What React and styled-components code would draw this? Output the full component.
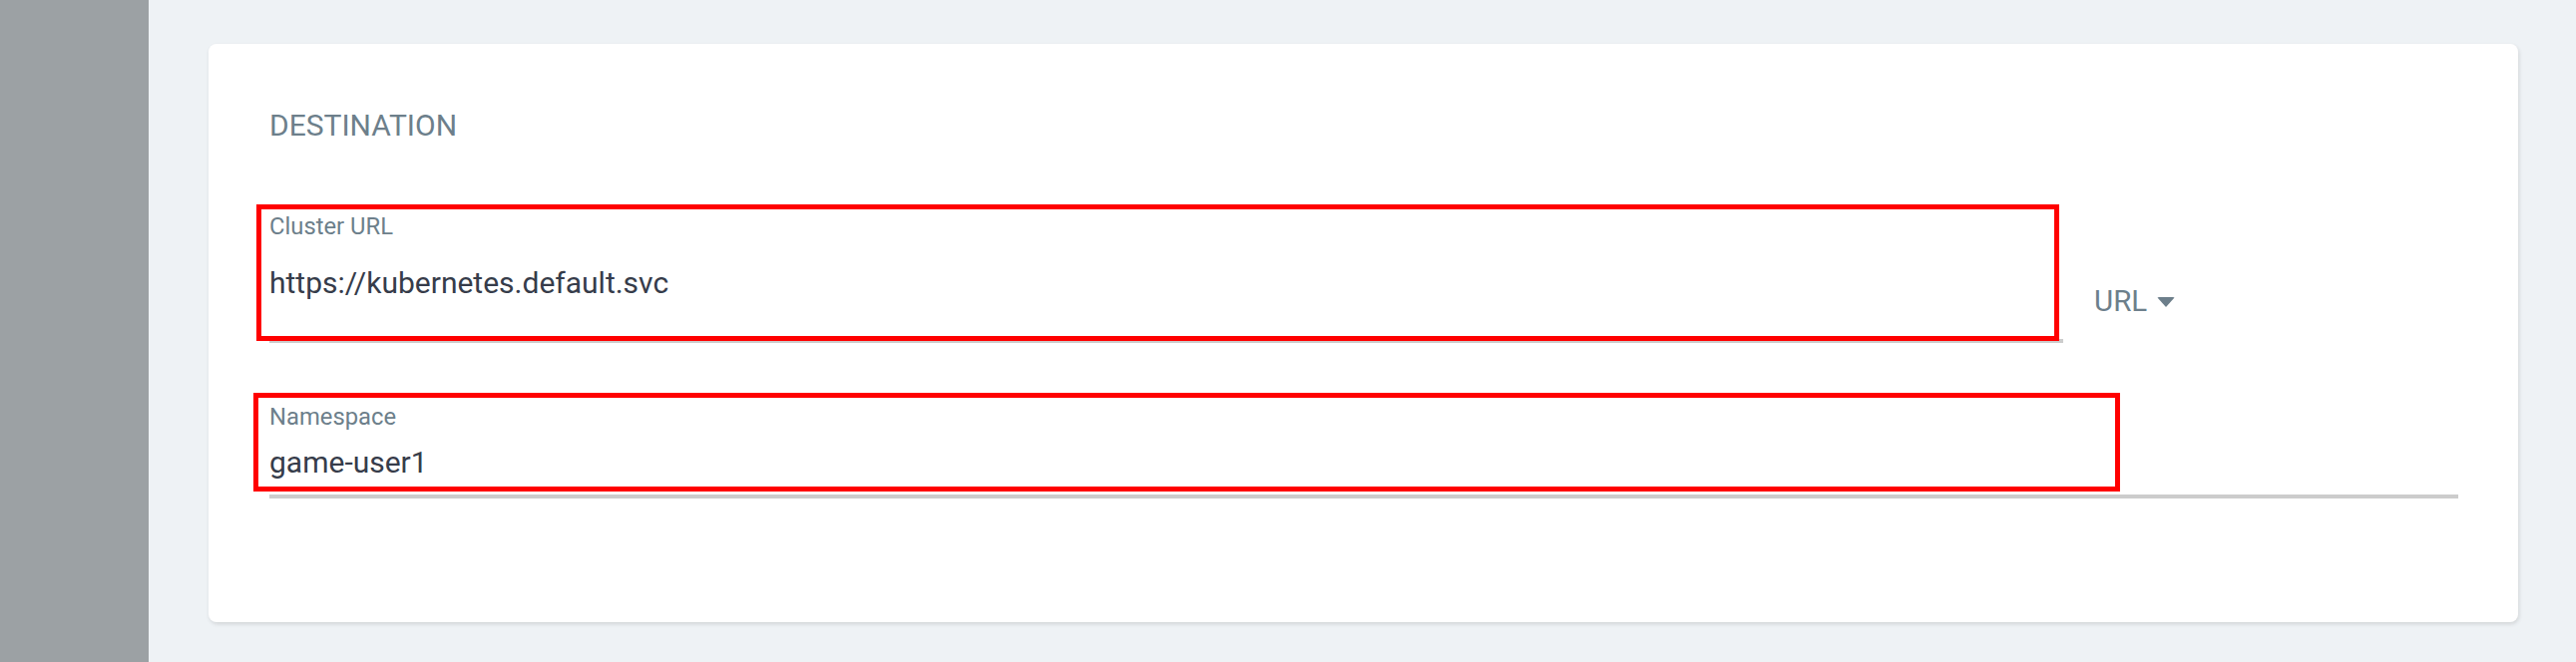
import React from 'react'
import styled, { createGlobalStyle } from 'styled-components'

const GlobalStyle = createGlobalStyle`
  html, body {
    margin: 0;
    padding: 0;
    background: #eef2f5;
  }
  body {
    font-family: Roboto, "Liberation Sans", sans-serif;
  }
`

const Page = styled.div`
  display: flex;
  width: 2582px;
  height: 664px;
  overflow: hidden;
  background: #eef2f5;
`

const Sidebar = styled.aside`
  width: 149px;
  flex-shrink: 0;
  background: #9ca1a4;
`

const Main = styled.main`
  flex: 1;
  padding: 44px 58px 0 60px;
`

const Card = styled.section`
  box-sizing: border-box;
  height: 580px;
  background: #fff;
  border-radius: 8px;
  box-shadow: 1px 2px 4px rgba(0, 0, 0, 0.12);
  padding: 64px 60px 0 61px;
`

const Title = styled.h2`
  margin: 0 0 70px;
  font-size: 30px;
  line-height: 35px;
  font-weight: 400;
  color: #6d7f8b;
  text-transform: uppercase;
`

const Row = styled.div`
  display: grid;
  grid-template-columns: 1fr 396px;
  margin-bottom: ${p => p.$gap || 0}px;
`

const Field = styled.div`
  position: relative;
  border-bottom: 4px solid #cccccc;
  padding-bottom: ${p => p.$pad}px;
`

const Label = styled.div`
  font-size: 23.8px;
  line-height: 28px;
  color: #6d7f8b;
`

const Value = styled.div`
  margin-top: ${p => p.$top}px;
  font-size: 30px;
  line-height: 35px;
  color: #363c4a;
`

const Annotation = styled.div`
  position: absolute;
  box-sizing: border-box;
  border: 5px solid #ff0000;
  pointer-events: none;
`

const TypeSelect = styled.div`
  display: flex;
  align-items: center;
  padding: 72px 0 0 31px;
  font-size: 29.5px;
  line-height: 35px;
  color: #6d7f8b;
  align-self: start;
`

const Caret = styled.span`
  display: inline-block;
  margin-left: 10px;
  width: 0;
  height: 0;
  border-left: 9px solid transparent;
  border-right: 9px solid transparent;
  border-top: 10px solid #6d7f8b;
  border-radius: 2px;
`

function App() {
  return (
    <>
      <GlobalStyle />
      <Page>
        <Sidebar />
        <Main>
          <Card>
            <Title>Destination</Title>
            <Row $gap={60}>
              <Field $pad={39}>
                <Label>Cluster URL</Label>
                <Value $top={25}>https://kubernetes.default.svc</Value>
                <Annotation style={{ left: -13, top: -8, width: 1807, height: 137 }} />
              </Field>
              <TypeSelect>
                URL<Caret />
              </TypeSelect>
            </Row>
            <Field $pad={15}>
              <Label>Namespace</Label>
              <Value $top={14}>game-user1</Value>
              <Annotation style={{ left: -16, top: -10, width: 1871, height: 99 }} />
            </Field>
          </Card>
        </Main>
      </Page>
    </>
  )
}

export default App
